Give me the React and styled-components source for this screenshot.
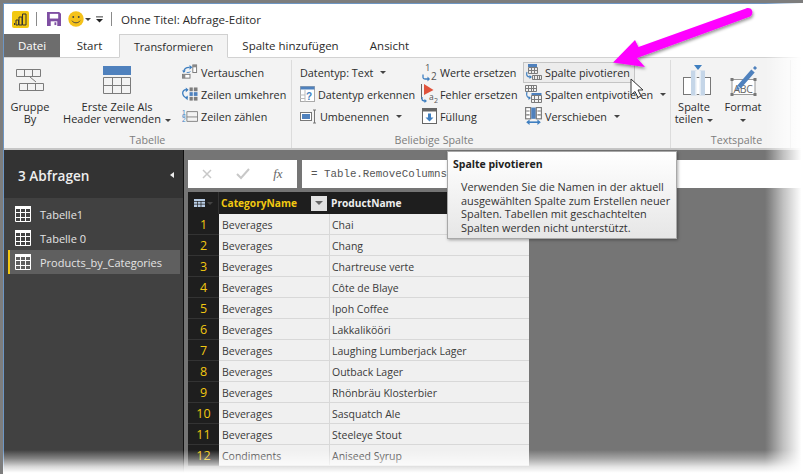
import React from "react";
import styled, { createGlobalStyle } from "styled-components";

const Global = createGlobalStyle`
  html, body { margin: 0; padding: 0; background: #fff; }
  * { box-sizing: border-box; }
  body { font-family: "Open Sans", "Noto Sans", sans-serif; -webkit-font-smoothing: antialiased; }
  svg { flex: none; }
`;

const Page = styled.div`
  position: relative; width: 803px; height: 474px; overflow: hidden; background: #fff;
  border-left: 3px solid #7d7d7d; border-top: 3px solid #7d7d7d;
`;
const Window = styled.div`
  width: 800px; height: 471px; display: flex; flex-direction: column;
  border-top: 1px solid #6d96c4; border-left: 1px solid #6d96c4;
`;
const TitleBar = styled.div`
  height: 30px; display: flex; align-items: center; background: #fff; padding-left: 8px; flex: none;
`;
const QatSep = styled.span`width: 1px; height: 14px; background: #8a8a8a; margin: ${p => p.$m};`;
const QatGap = styled.span`width: ${p => p.$w}px; flex: none;`;
const TitleText = styled.span`font-size: 11.6px; color: #2b2b2b; white-space: nowrap;`;
const Tabs = styled.div`height: 23px; display: flex; align-items: stretch; flex: none; background: #fff; position: relative; z-index: 1;`;
const Tab = styled.div`
  width: ${p => p.$w}px; display: flex; align-items: center; justify-content: center;
  font-size: ${p => p.$fs || 11.5}px; white-space: nowrap;
  color: ${p => (p.$file ? "#fff" : "#2b2b2b")};
  background: ${p => (p.$file ? "#6d6d6d" : p.$active ? "#f3f3f3" : "#fff")};
  ${p => p.$active && "border: 1px solid #d0d0d0; border-bottom: 1px solid #f3f3f3; height: 24px;"}
`;
const Ribbon = styled.div`
  height: 93px; flex: none; display: flex; background: #f3f3f3;
  border-top: 1px solid #d2d2d2; border-bottom: 2px solid #c6c6c6;
`;
const Group = styled.div`
  width: ${p => p.$w}px; flex: none; display: flex; flex-direction: column; position: relative;
  padding-left: ${p => p.$pl || 0}px; margin: 2px 0 0;
  border-right: 1px solid #dcdcdc;
`;
const GroupBody = styled.div`flex: 1; min-height: 0; display: flex; align-items: flex-start;`;
const GroupLabel = styled.div`font-size: 10.7px; line-height: 15px; height: 15px; text-align: center; color: #7d7d7d; margin-left: ${p => p.$ml || 0}px;`;
const Large = styled.div`
  width: ${p => p.$w}px; margin-right: ${p => p.$mr || 0}px; flex: none; display: flex; flex-direction: column; align-items: center;
`;
const LargeText = styled.div`
  font-size: 11px; line-height: 12px; color: #2b2b2b; text-align: center; white-space: nowrap; margin-left: ${p => p.$ml || 0}px;
`;
const LargeIcon = styled.div`height: 41px; display: flex; align-items: center; justify-content: center; padding-left: ${p => p.$pl || 0}px;`;
const Caret = styled.span`
  display: inline-block; width: 0; height: 0; margin-left: ${p => p.$ml ?? 4}px; vertical-align: middle;
  border-left: 3px solid transparent; border-right: 3px solid transparent; border-top: 3px solid #444;
`;
const SmallCol = styled.div`
  width: ${p => p.$w}px; flex: none; display: flex; flex-direction: column; margin-top: 2px; margin-left: ${p => p.$ml || 0}px;
`;
const Small = styled.div`
  height: 22px; display: flex; align-items: center; font-size: 10.8px; color: #2b2b2b; white-space: nowrap;
  gap: ${p => p.$gap ?? 3}px; padding-left: ${p => p.$pl ?? 0}px; padding-bottom: 2px;
  ${p => p.$hover && "border: 1px solid #c4c4c4; background: #ececec; width: 112px; height: 21px; margin-bottom: 1px; padding-bottom: 1px;"}
`;
const Main = styled.div`flex: 1; display: flex; min-height: 0; background: #757575;`;
const Sidebar = styled.div`width: 180px; flex: none; background: #414141; border-right: 1px solid #111;`;
const SideHead = styled.div`
  height: 48px; background: #333; color: #eee; font-size: 13.6px; font-weight: 600; display: flex; align-items: center; justify-content: space-between;
  padding: 2px 9px 0 14px; margin-bottom: 4px;
`;
const Chevron = styled.span`
  width: 0; height: 0; border-top: 3.5px solid transparent; border-bottom: 3.5px solid transparent; border-right: 4px solid #eee;
`;
const Query = styled.div`
  height: 24px; width: 172px; margin-left: 4px; display: flex; align-items: center; gap: 9px; padding-left: 5px;
  font-size: 11px; color: #e4e4e4; white-space: nowrap;
  border-left: 2px solid ${p => (p.$sel ? "#f2c811" : "transparent")};
  background: ${p => (p.$sel ? "#5f5f5f" : "transparent")};
`;
const Content = styled.div`flex: 1; min-width: 0; padding: 10px 0 0 4px;`;
const FormulaRow = styled.div`display: flex; gap: 5px; height: 28px;`;
const FxBox = styled.div`
  width: 109px; background: #fff; display: flex; align-items: center; justify-content: space-around; padding: 0 3px 0 2px; flex: none;
`;
const FxLabel = styled.span`color: #666; font-family: "Liberation Serif", serif; font-style: italic; font-size: 13px;`;
const Formula = styled.div`
  flex: 1; background: #fff; font-family: "Liberation Mono", monospace; font-size: 10.8px; color: #555; display: flex; align-items: center; padding-left: 9px; white-space: pre;
`;
const Table = styled.div`margin-top: 4px; width: 341px;`;
const HeadRow = styled.div`display: flex; height: 22px; background: #1e1e1e; align-items: center;`;
const Row = styled.div`display: flex; height: 21px; background: #f0f0f0; border-bottom: 1px solid #d8d8d8;`;
const Num = styled.div`
  width: 31px; flex: none; background: #1e1e1e; color: #f2c811; font-size: 12.5px; display: flex; align-items: center; justify-content: center;
  border-bottom: 1px solid #333; margin-bottom: -1px;
`;
const HeadCorner = styled.div`width: 31px; height: 22px; flex: none; display: flex; align-items: center; justify-content: center; gap: 2px; border-right: 1px solid #333;`;
const Cell = styled.div`
  width: ${p => p.$w}px; flex: none; font-size: 10.5px; color: #3a3a3a; display: flex; align-items: center; padding: 2px 0 0 2px;
  border-left: 1px solid ${p => (p.$line ? "#d8d8d8" : "transparent")}; white-space: nowrap;
`;
const HeadCell = styled.div`
  width: ${p => p.$w}px; flex: none; font-size: 10.2px; font-weight: 700; color: ${p => p.$c}; padding-left: 2px; display: flex; align-items: center; justify-content: space-between; white-space: nowrap;
`;
const FilterBtn = styled.span`
  width: 16px; height: 15px; background: #e2e2e2; display: flex; align-items: center; justify-content: center; margin-right: 2px;
`;
const FilterArrow = styled.span`width: 0; height: 0; border-left: 4px solid transparent; border-right: 4px solid transparent; border-top: 4px solid #666;`;
const Tooltip = styled.div`
  position: absolute; left: 444px; top: 148px; width: 230px; height: 88px; padding: 6px 5px;
  background: linear-gradient(#fff, #e6e6e6); border: 1px solid #a8a8a8; box-shadow: 1px 1px 3px rgba(0,0,0,.35);
  line-height: 13.4px; color: #333; z-index: 5;
`;
const TipTitle = styled.div`font-size: 10.5px; font-weight: 700; margin-bottom: 9px; color: #222;`;
const TipBody = styled.div`font-size: 10.9px; padding-left: 8px; white-space: nowrap;`;
const FadeRight = styled.div`
  position: absolute; left: 762px; top: -3px; width: 38px; bottom: 0; z-index: 6;
  background: linear-gradient(90deg, rgba(255,255,255,0) 0%, rgba(255,255,255,.12) 12%, rgba(255,255,255,.55) 48%, #fff 96%);
`;
const FadeBottom = styled.div`
  position: absolute; left: -3px; right: 0; top: 447px; height: 24px; z-index: 6;
  background: linear-gradient(180deg, rgba(255,255,255,0) 0%, rgba(255,255,255,.35) 35%, rgba(255,255,255,.8) 70%, #fff 95%);
`;
const Overlay = styled.svg`position: absolute; left: -3px; top: -3px; z-index: 7; pointer-events: none;`;

const Logo = () => (
  <svg width="17" height="17" viewBox="0 0 17 17"><rect width="17" height="17" rx="2" fill="#f2c811" />
    <path d="M10.5 3h3.5v11h-3.5zM7 6h3v8H7zM4 9h2.500v5H4z" fill="none" stroke="#333" strokeWidth="1" /><path d="M2 12h1v2H2z" fill="#333" /></svg>
);
const Save = () => (
  <svg width="14" height="14" viewBox="0 0 15 15"><path d="M0 0h13l2 2v13H0z" fill="#7f4fa3" /><rect x="3" y="2" width="9" height="5" fill="#fff" /><rect x="4" y="10" width="7" height="5" fill="#fff" /><rect x="8" y="11" width="2" height="3" fill="#7f4fa3" /></svg>
);
const Smile = () => (
  <svg width="16" height="16" viewBox="0 0 17 17"><circle cx="8.500" cy="8.500" r="8.200" fill="#f5c21a" /><circle cx="5.600" cy="6.400" r="1" fill="#444" /><circle cx="11.400" cy="6.400" r="1" fill="#444" /><path d="M4.200 10.300c1.800 3 6.800 3 8.600 0" fill="none" stroke="#444" /></svg>
);
const QatMore = () => (
  <svg width="7" height="7" viewBox="0 0 8 7"><path d="M0 .5h8" stroke="#222" /><path d="M0 3h8L4 7z" fill="#222" /></svg>
);
const Grid = ({ x, y, w, h, cols, rows, c = "#7b7b7b" }) => {
  let d = `M${x + .5} ${y + .5}h${w}v${h}h-${w}z`;
  for (let i = 1; i < cols; i++) d += `M${x + .5 + Math.round(w * i / cols)} ${y + .5}v${h}`;
  for (let i = 1; i < rows; i++) d += `M${x + .5} ${y + .5 + Math.round(h * i / rows)}h${w}`;
  return <path d={d} fill="none" stroke={c} />;
};
const GroupIcon = () => (
  <svg width="29" height="24" viewBox="0 0 29 24"><Grid x={0} y={0} w={24} h={7} cols={3} rows={1} /><Grid x={3} y={14} w={24} h={7} cols={3} rows={1} /><path d="M14 8l6 5" stroke="#7b7b7b" /></svg>
);
const HeaderIcon = () => (
  <svg width="29" height="29" viewBox="0 0 29 29"><rect width="28" height="9" fill="#4f81bd" /><Grid x={0} y={11} w={27} h={16} cols={3} rows={2} /></svg>
);
const SwapIcon = () => (
  <svg width="16" height="16" viewBox="0 0 17 16"><rect x="11.500" y=".5" width="4" height="8" fill="#fff" stroke="#777" /><rect x="11.500" y=".5" width="4" height="2.500" fill="#8a8a8a" /><rect x=".5" y="10.500" width="8" height="4" fill="#fff" stroke="#777" /><rect x=".5" y="10.500" width="3" height="4" fill="#8a8a8a" />
    <path d="M2 8c0-3 2-5 6-5" fill="none" stroke="#3f7fc0" strokeWidth="1.400" /><path d="M8 .5l3 2.500-3 2.500zM0 6.500h4L2 9z" fill="#3f7fc0" /><path d="M5 8.500c2 0 3 0 4-1" fill="none" stroke="#3f7fc0" /></svg>
);
const ReverseIcon = () => (
  <svg width="16" height="15" viewBox="0 0 17 16"><path d="M6 3C2 2 0 5 1 8c.5 2 3 4 5 3" fill="none" stroke="#3f7fc0" strokeWidth="1.400" /><path d="M4 .5l3 2.500-3 2.500zM6 9l-3 2.500 3 2.500z" fill="#3f7fc0" /><rect x="8" y=".5" width="8.500" height="4" fill="#7d7d7d" /><rect x="8" y="5.500" width="8.500" height="4" fill="#4f81bd" /><rect x="8" y="10.500" width="8.500" height="4" fill="#7d7d7d" /><path d="M12 0v15" stroke="#fff" /></svg>
);
const CountIcon = () => (
  <svg width="16" height="15" viewBox="0 0 18 16"><text x="0" y="6.500" fontSize="7.500" fill="#3f7fc0" fontFamily="Liberation Sans">1</text><text x="0" y="14.500" fontSize="7.500" fill="#3f7fc0" fontFamily="Liberation Sans">2</text><path d="M0 7.500h4" stroke="#3f7fc0" /><Grid x={5} y={2} w={12} h={11} cols={1} rows={2} /></svg>
);
const DetectIcon = () => (
  <svg width="15" height="16" viewBox="0 0 15 16"><rect x=".5" y=".5" width="14" height="15" fill="#fff" stroke="#aaa" /><rect x=".5" y=".5" width="14" height="3" fill="#4f81bd" /><text x="6" y="13.500" fontSize="10" fontWeight="700" fill="#3f7fc0" fontFamily="Liberation Sans">?</text><path d="M5 4v12M0 9h5M0 12.500h5" stroke="#bbb" /></svg>
);
const RenameIcon = () => (
  <svg width="17" height="15" viewBox="0 0 17 15"><rect x=".5" y="3.500" width="11" height="8" fill="#fff" stroke="#777" /><rect x="2" y="5" width="8" height="5" fill="#4f81bd" /><path d="M13 1h3M14.500 1v13M13 14h3" fill="none" stroke="#777" /></svg>
);
const ReplaceIcon = () => (
  <svg width="16" height="20" viewBox="0 0 16 20"><text x="3" y="9" fontSize="9.500" fill="#555" fontFamily="Open Sans">1</text><text x="9" y="18" fontSize="10" fill="#555" fontFamily="Open Sans">2</text><path d="M1 12.500v3c0 1 .5 1.500 2 1.500h3" fill="none" stroke="#3f7fc0" strokeWidth="1.300" /><path d="M5.500 14.500l2.500 2.500-2.500 2.500z" fill="#3f7fc0" /></svg>
);
const ErrorIcon = () => (
  <svg width="17" height="20" viewBox="0 0 17 20"><path d="M.5 0v15" stroke="#666" /><path d="M3 0l9.500 6L3 11z" fill="#e0533c" /><text x="8" y="16" fontSize="8.500" fill="#555" fontFamily="Open Sans">a</text><text x="13" y="19" fontSize="7" fill="#555" fontFamily="Open Sans">2</text><path d="M1 13v2c0 1.500 1 2 3 2" fill="none" stroke="#3f7fc0" strokeWidth="1.300" /><path d="M3.500 15l2.500 2-2.500 2z" fill="#3f7fc0" /></svg>
);
const FillIcon = () => (
  <svg width="15" height="16" viewBox="0 0 15 16"><rect x=".5" y=".5" width="14" height="15" fill="#fff" stroke="#666" /><rect x=".5" y=".5" width="14" height="3" fill="#666" /><path d="M6 5.500h3v4h2.500l-4 4-4-4H6z" fill="#3f7fc0" /></svg>
);
const PivotIcon = () => (
  <svg width="17" height="18" viewBox="0 0 17 18"><rect x="3" y="1" width="9" height="3" fill="#4f81bd" /><Grid x={3} y={4} w={9} h={6} cols={3} rows={2} /><Grid x={7} y={12} w={9} h={4} cols={4} rows={1} /><path d="M2 9c-1 3 0 5 3 5" fill="none" stroke="#3f7fc0" strokeWidth="1.200" /><path d="M4.500 12l2.500 2-2.500 2z" fill="#3f7fc0" /></svg>
);
const UnpivotIcon = () => (
  <svg width="17" height="18" viewBox="0 0 17 18"><Grid x={0} y={0} w={11} h={6} cols={4} rows={2} /><rect x="6.500" y="8" width="10" height="2.500" fill="#4f81bd" /><Grid x={6} y={10} w={10} h={7} cols={3} rows={2} /><path d="M2 7c-1 3 0 6 3 6" fill="none" stroke="#3f7fc0" strokeWidth="1.200" /><path d="M3.500 11l2.500 2-2.500 2z" fill="#3f7fc0" /></svg>
);
const MoveIcon = () => (
  <svg width="17" height="18" viewBox="0 0 15 16"><rect x=".5" y=".5" width="4.500" height="10" fill="#fff" stroke="#777" /><rect x="5.500" y=".5" width="4" height="10" fill="#4f81bd" /><rect x="10" y=".5" width="4.500" height="10" fill="#fff" stroke="#777" /><path d="M1 3.500h3M1 7h3M11 3.500h3M11 7h3" stroke="#777" /><path d="M2 13.500h11" stroke="#3f7fc0" strokeWidth="1.400" /><path d="M4 11l-3 2.500L4 16zM11 11l3 2.500L11 16z" fill="#3f7fc0" /></svg>
);
const SplitIcon = () => (
  <svg width="29" height="31" viewBox="0 0 29 31"><rect x=".5" y="12.500" width="27" height="17" fill="#fff" stroke="#777" /><rect x="8.500" y="6" width="4.500" height="24" fill="#c5d6e8" stroke="#c5d6e8" /><rect x="17" y="6" width="4.500" height="24" fill="#c5d6e8" stroke="#c5d6e8" /><path d="M13 30V6M17 30V6" stroke="#fff" /><path d="M11 0h8l-4 5z" fill="#3f7fc0" /></svg>
);
const FormatIcon = () => (
  <svg width="30" height="30" viewBox="0 0 30 30"><path d="M3 13.500h23v15H3z" fill="#fff" stroke="#999" /><path d="M1.500 12h3v3h-3zM24.500 12h3v3h-3zM1.500 27h3v3h-3zM24.500 27h3v3h-3z" fill="#777" /><text x="4.500" y="26.500" fontSize="10.500" fill="#666" fontFamily="Open Sans" letterSpacing="-.3">ABC</text><path d="M10 21L24 5" stroke="#4f81bd" strokeWidth="4.500" /><path d="M25 3l2-2" stroke="#4f81bd" strokeWidth="3" /><path d="M7 24l1-4 3 3z" fill="#4f81bd" /></svg>
);
const TableIcon = () => (
  <svg width="16" height="16" viewBox="0 0 16 16"><rect width="16" height="3" fill="#fff" /><Grid x={0} y={2} w={15} h={13} cols={3} rows={3} c="#fff" /></svg>
);
const CornerIcon = () => (
  <svg width="11" height="8" viewBox="0 0 11 8"><rect width="11" height="8" fill="#b8cce4" /><path d="M0 2.500h11M0 5.200h11M3.500 2v6M7 2v6" stroke="#1e1e1e" strokeWidth=".7" /></svg>
);

const rows = [
  ["Beverages", "Chai"], ["Beverages", "Chang"], ["Beverages", "Chartreuse verte"], ["Beverages", "Côte de Blaye"],
  ["Beverages", "Ipoh Coffee"], ["Beverages", "Lakkalikööri"], ["Beverages", "Laughing Lumberjack Lager"], ["Beverages", "Outback Lager"],
  ["Beverages", "Rhönbräu Klosterbier"], ["Beverages", "Sasquatch Ale"], ["Beverages", "Steeleye Stout"], ["Condiments", "Aniseed Syrup"],
];

export default function App() {
  return (
    <>
      <Global />
      <Page>
        <Window>
          <TitleBar>
            <Logo />
            <QatSep $m="0 10px 0 7px" />
            <Save />
            <QatGap $w={7} />
            <Smile />
            <Caret $ml={1} />
            <QatGap $w={5} />
            <QatMore />
            <QatSep $m="0 9px 0 8px" />
            <TitleText>Ohne Titel: Abfrage-Editor</TitleText>
          </TitleBar>
          <Tabs>
            <Tab $file $w={56}>Datei</Tab>
            <Tab $w={59}>Start</Tab>
            <Tab $active $w={109} $fs={10.9}>Transformieren</Tab>
            <Tab $w={125}>Spalte hinzufügen</Tab>
            <Tab $w={73}>Ansicht</Tab>
          </Tabs>
          <Ribbon>
            <Group $w={288}>
              <GroupBody>
                <Large $w={52} $mr={2}><LargeIcon><GroupIcon /></LargeIcon><LargeText>Gruppe<br />By</LargeText></Large>
                <Large $w={118}><LargeIcon><HeaderIcon /></LargeIcon><LargeText>Erste Zeile Als<br />Header verwenden<Caret /></LargeText></Large>
                <SmallCol $w={110} $ml={6}>
                  <Small><SwapIcon />Vertauschen</Small>
                  <Small><ReverseIcon />Zeilen umkehren</Small>
                  <Small><CountIcon />Zeilen zählen</Small>
                </SmallCol>
              </GroupBody>
              <GroupLabel>Tabelle</GroupLabel>
            </Group>
            <Group $w={379} $pl={7}>
              <GroupBody>
                <SmallCol $w={122}>
                  <Small $pl={1}>Datentyp: Text<Caret /></Small>
                  <Small $pl={1}><DetectIcon />Datentyp erkennen</Small>
                  <Small $pl={1}><RenameIcon />Umbenennen<Caret /></Small>
                </SmallCol>
                <SmallCol $w={102}>
                  <Small $pl={1} $gap={2}><ReplaceIcon />Werte ersetzen</Small>
                  <Small $gap={2}><ErrorIcon />Fehler ersetzen</Small>
                  <Small $pl={1} $gap={3}><FillIcon />Füllung</Small>
                </SmallCol>
                <SmallCol $w={140}>
                  <Small $hover $pl={1}><PivotIcon />Spalte pivotieren</Small>
                  <Small $pl={2}><UnpivotIcon />Spalten entpivotieren<Caret /></Small>
                  <Small $pl={2}><MoveIcon />Verschieben<Caret /></Small>
                </SmallCol>
              </GroupBody>
              <GroupLabel $ml={-101}>Beliebige Spalte</GroupLabel>
            </Group>
            <Group $w={120}>
              <GroupBody>
                <Large $w={46} $mr={2}><LargeIcon $pl={7}><SplitIcon /></LargeIcon><LargeText>Spalte<br />teilen<Caret /></LargeText></Large>
                <Large $w={48}><LargeIcon $pl={2}><FormatIcon /></LargeIcon><LargeText>Format<br /><Caret $ml={0} /></LargeText></Large>
              </GroupBody>
              <GroupLabel $ml={12}>Textspalte</GroupLabel>
            </Group>
          </Ribbon>
          <Main>
            <Sidebar>
              <SideHead>3 Abfragen<Chevron /></SideHead>
              <Query><TableIcon />Tabelle1</Query>
              <Query><TableIcon />Tabelle 0</Query>
              <Query $sel><TableIcon />Products_by_Categories</Query>
            </Sidebar>
            <Content>
              <FormulaRow>
                <FxBox>
                  <svg width="12" height="12" viewBox="0 0 12 12"><path d="M2 2l8 8M10 2l-8 8" stroke="#c8c8c8" strokeWidth="1.500" /></svg>
                  <svg width="14" height="12" viewBox="0 0 14 12"><path d="M1 6l4 4 8-9" fill="none" stroke="#c8c8c8" strokeWidth="2" /></svg>
                  <FxLabel>fx</FxLabel>
                </FxBox>
                <Formula>= Table.RemoveColumns</Formula>
              </FormulaRow>
              <Table>
                <HeadRow>
                  <HeadCorner><CornerIcon /><Caret $ml={0} /></HeadCorner>
                  <HeadCell $w={110} $c="#f2c811">CategoryName<FilterBtn><FilterArrow /></FilterBtn></HeadCell>
                  <HeadCell $w={200} $c="#eee">ProductName</HeadCell>
                </HeadRow>
                {rows.map((r, i) => (
                  <Row key={i}>
                    <Num>{i + 1}</Num>
                    <Cell $w={110}>{r[0]}</Cell>
                    <Cell $w={200} $line>{r[1]}</Cell>
                  </Row>
                ))}
              </Table>
            </Content>
          </Main>
        </Window>
        <Tooltip>
          <TipTitle>Spalte pivotieren</TipTitle>
          <TipBody>Verwenden Sie die Namen in der aktuell<br />ausgewählten Spalte zum Erstellen neuer<br />Spalten. Tabellen mit geschachtelten<br />Spalten werden nicht unterstützt.</TipBody>
        </Tooltip>
        <FadeRight />
        <FadeBottom />
        <Overlay width="803" height="474" viewBox="0 0 803 474">
          <defs><filter id="sh" x="-20%" y="-20%" width="140%" height="140%"><feDropShadow dx="1" dy="2" stdDeviation="1.500" floodColor="#000" floodOpacity=".4" /></filter></defs>
          <g filter="url(#sh)" fill="#ff00ff">
            <path d="M746 8.500c2-.8 5-.5 6 2 1.200 3-.5 5.500-2.500 6.300L637 58l8 9-32-4.500L635 40l3.500 7z" />
          </g>
          <path d="M631 79v16l4-3.500 3 6 3-1.500-3-6h5z" fill="#fff" stroke="#333" strokeWidth="1" />
        </Overlay>
      </Page>
    </>
  );
}
